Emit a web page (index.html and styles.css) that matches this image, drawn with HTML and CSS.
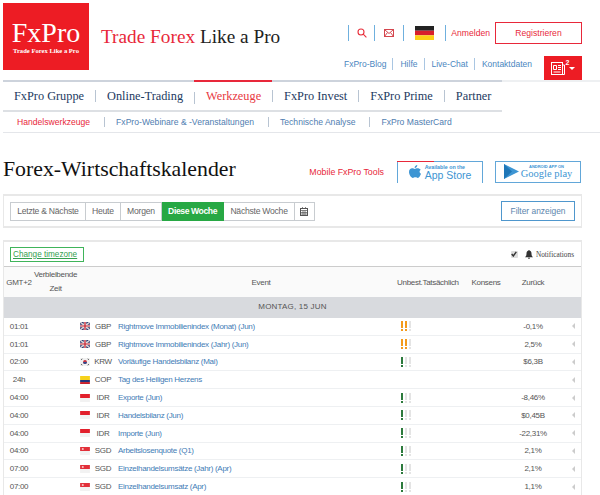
FILE: index.html
```html
<!DOCTYPE html>
<html lang="de">
  <head>
    <meta charset="UTF-8" />
    <title>Forex-Wirtschaftskalender</title>
    <link rel="stylesheet" href="styles.css">
  </head>
  <body>
    <svg class="defs" width="0" height="0">
      <symbol id="gb" viewBox="0 0 11 9">
        <rect width="11" height="9" fill="#27346e" />
        <path d="M0 0l11 9M11 0L0 9" stroke="#ddd" stroke-width="1.6" />
        <path d="M5.5 0v9M0 4.5h11" stroke="#e8e8e8" stroke-width="3" />
        <path d="M5.5 0v9M0 4.5h11" stroke="#c8202f" stroke-width="1.4" />
      </symbol>
      <symbol id="kr" viewBox="0 0 11 9">
        <rect width="11" height="9" fill="#f1f1f1" />
        <circle cx="5.5" cy="4.5" r="2.2" fill="#c8303c" />
        <path d="M3.3 4.5a2.2 2.2 0 0 0 4.4 0z" fill="#2b4a8f" />
        <path d="M1 2l1.5-1M1 7l1.5 1M8.5 1L10 2M8.5 8L10 7" stroke="#555" />
      </symbol>
      <symbol id="co" viewBox="0 0 11 9">
        <rect width="11" height="4.5" fill="#f6d21c" />
        <rect y="4.5" width="11" height="2.3" fill="#22357c" />
        <rect y="6.8" width="11" height="2.2" fill="#c9202c" />
      </symbol>
      <symbol id="id" viewBox="0 0 11 9">
        <rect width="11" height="4.5" fill="#e2202c" />
        <rect y="4.5" width="11" height="4.5" fill="#f2f2f2" />
      </symbol>
      <symbol id="sg" viewBox="0 0 11 9">
        <rect width="11" height="4.5" fill="#e2303a" />
        <rect y="4.5" width="11" height="4.5" fill="#f2f2f2" />
        <circle cx="3" cy="2.3" r="1.2" fill="#f6c6c6" />
      </symbol>
    </svg>

    <header class="top">
      <div class="logo">
        <span class="logo-name">FxPro</span>
        <span class="logo-sub">Trade Forex Like a Pro</span>
      </div>
      <p class="tagline"><span class="red">Trade Forex</span> Like a Pro</p>
      <div class="tools">
        <div class="tools-row">
          <span class="vsep"></span>
          <svg class="ico-search" width="10" height="10" viewBox="0 0 10 10" fill="none" stroke="#e8303c" stroke-width="1.1"><circle cx="4" cy="4" r="3" /><path d="M6.2 6.2L9.4 9.4" /></svg>
          <span class="vsep"></span>
          <svg class="ico-mail" width="10" height="8" viewBox="0 0 10 8" fill="none" stroke="#d4464e"><rect x=".5" y=".5" width="9" height="7" /><path d="M.5.5L5 4.5 9.5.5M.5 7.5L3.5 3.500M9.5 7.5L6.5 3.500" /></svg>
          <span class="vsep"></span>
          <svg class="flag-de" width="19" height="14" viewBox="0 0 19 14"><rect width="19" height="4.7" fill="#222" /><rect y="4.7" width="19" height="4.6" fill="#d8202c" /><rect y="9.3" width="19" height="4.7" fill="#fcd116" /></svg>
          <span class="vsep"></span>
          <a class="login">Anmelden</a>
          <a class="register">Registrieren</a>
        </div>
        <div class="tools-row links-row">
          <a>FxPro-Blog</a>
          <a>Hilfe</a>
          <a>Live-Chat</a>
          <a>Kontaktdaten</a>
          <div class="news-btn">
            <svg width="14" height="13" viewBox="0 0 14 13" fill="none" stroke="#fff"><rect x=".5" y=".5" width="11" height="12" /><path d="M11.5 3h2v9.500h-2M2.500 3.500h3v4h-3zM7 3.500h3M7 5.500h3M7 7.500h3M2.500 10h7" /></svg>
            <sup>2</sup>
            <span class="caret"></span>
          </div>
        </div>
      </div>
    </header>

    <nav class="main-nav">
      <ul>
        <li>FxPro Gruppe</li>
        <li>Online-Trading</li>
        <li class="current">Werkzeuge</li>
        <li>FxPro Invest</li>
        <li>FxPro Prime</li>
        <li>Partner</li>
      </ul>
    </nav>
    <nav class="sub-nav">
      <ul>
        <li class="current">Handelswerkzeuge</li>
        <li>FxPro-Webinare &amp; -Veranstaltungen</li>
        <li>Technische Analyse</li>
        <li>FxPro MasterCard</li>
      </ul>
    </nav>

    <section class="title-row">
      <h1>Forex-Wirtschaftskalender</h1>
      <span class="mobile-label">Mobile FxPro Tools</span>
      <a class="store store-apple">
        <svg width="12" height="14" viewBox="0 0 13 15" fill="#3d95d3"><path d="M9 0c.1 1.700-1.300 3.200-2.900 3.100C6 1.500 7.500.1 9 0zM12.600 5c-1.700 1-1.500 3.600.4 4.400-.6 1.800-2 4.500-3.400 4.500-1 0-1.400-.6-2.700-.6s-1.800.6-2.700.6C2.400 13.900 0 10.400 0 7.500 0 4.900 1.700 3.500 3.400 3.500c1.100 0 2.100.7 2.800.7.700 0 1.700-.8 3-.8 1.300 0 2.600.6 3.400 1.600z" /></svg>
        <span class="store-text"><small>Available on the</small><b>App Store</b></span>
      </a>
      <a class="store store-google">
        <svg width="15" height="15" viewBox="0 0 15 15"><path d="M0 0l15 7.500L0 15z" fill="#3d95d3" /><path d="M0 0l8 7.500L0 15" fill="#1f77b8" /></svg>
        <span class="store-text"><small class="tiny">ANDROID APP ON</small><b class="google-play">Google play</b></span>
      </a>
    </section>

    <section class="panel filters">
      <div class="tabs">
        <a>Letzte &amp; Nächste</a>
        <a>Heute</a>
        <a>Morgen</a>
        <a class="active">Diese Woche</a>
        <a>Nächste Woche</a>
        <a class="cal">
          <svg width="8" height="9" viewBox="0 0 8 9" fill="none" stroke="#555"><rect x=".5" y="1.500" width="7" height="7" /><path d="M.5 3.500h7M2.500 0v2M5.500 0v2M.5 5.500h7M.5 7h7M3 3.500v5M5 3.500v5" stroke-width=".7" /></svg>
        </a>
      </div>
      <a class="filter-btn">Filter anzeigen</a>
    </section>

    <section class="panel calendar">
      <div class="cal-top">
        <a class="timezone">Change timezone</a>
        <div class="notify">
          <span class="check">
            <svg width="6" height="6" viewBox="0 0 6 6" fill="none" stroke="#333" stroke-width="1.400"><path d="M.7 3l1.600 2L5.300.8" /></svg>
          </span>
          <svg class="bell" width="8" height="9" viewBox="0 0 8 9" fill="#333"><path d="M4 0c.5 0 .7.300.7.700C6 1 6.500 2 6.500 3.500c0 2 .5 2.800 1.500 3.700H0c1-.9 1.500-1.700 1.500-3.700C1.500 2 2 1 3.300.7 3.300.3 3.500 0 4 0zM3 7.800h2C5 8.500 4.500 9 4 9S3 8.500 3 7.800z" /></svg>
          <span class="notify-label">Notifications</span>
        </div>
      </div>
      <div class="row head">
        <span>GMT+2</span>
        <span class="remaining">Verbleibende Zeit</span>
        <span class="event-head">Event</span>
        <span>Unbest.Tatsächlich</span>
        <span>Konsens</span>
        <span>Zurück</span>
      </div>
      <div class="day">MONTAG, 15 JUN</div>

      <div class="row">
        <span>01:01</span><span></span>
        <svg class="flag"><use href="#gb" /></svg>
        <span class="cur">GBP</span>
        <a class="event">Rightmove Immobilienindex (Monat) (Jun)</a>
        <span class="imp imp-mid"><i></i><i></i><i></i></span>
        <span></span><span>-0,1%</span><span class="back"></span>
      </div>
      <div class="row">
        <span>01:01</span><span></span>
        <svg class="flag"><use href="#gb" /></svg>
        <span class="cur">GBP</span>
        <a class="event">Rightmove Immobilienindex (Jahr) (Jun)</a>
        <span class="imp imp-mid"><i></i><i></i><i></i></span>
        <span></span><span>2,5%</span><span class="back"></span>
      </div>
      <div class="row">
        <span>02:00</span><span></span>
        <svg class="flag"><use href="#kr" /></svg>
        <span class="cur">KRW</span>
        <a class="event">Vorläufige Handelsbilanz (Mai)</a>
        <span class="imp imp-low"><i></i><i></i><i></i></span>
        <span></span><span>$6,3B</span><span class="back"></span>
      </div>
      <div class="row">
        <span>24h</span><span></span>
        <svg class="flag"><use href="#co" /></svg>
        <span class="cur">COP</span>
        <a class="event">Tag des Heiligen Herzens</a>
        <span></span>
        <span></span><span></span><span class="back"></span>
      </div>
      <div class="row">
        <span>04:00</span><span></span>
        <svg class="flag"><use href="#id" /></svg>
        <span class="cur">IDR</span>
        <a class="event">Exporte (Jun)</a>
        <span class="imp imp-low"><i></i><i></i><i></i></span>
        <span></span><span>-8,46%</span><span class="back"></span>
      </div>
      <div class="row">
        <span>04:00</span><span></span>
        <svg class="flag"><use href="#id" /></svg>
        <span class="cur">IDR</span>
        <a class="event">Handelsbilanz (Jun)</a>
        <span class="imp imp-low"><i></i><i></i><i></i></span>
        <span></span><span>$0,45B</span><span class="back"></span>
      </div>
      <div class="row">
        <span>04:00</span><span></span>
        <svg class="flag"><use href="#id" /></svg>
        <span class="cur">IDR</span>
        <a class="event">Importe (Jun)</a>
        <span class="imp imp-low"><i></i><i></i><i></i></span>
        <span></span><span>-22,31%</span><span class="back"></span>
      </div>
      <div class="row">
        <span>04:00</span><span></span>
        <svg class="flag"><use href="#sg" /></svg>
        <span class="cur">SGD</span>
        <a class="event">Arbeitslosenquote (Q1)</a>
        <span class="imp imp-low"><i></i><i></i><i></i></span>
        <span></span><span>2,1%</span><span class="back"></span>
      </div>
      <div class="row">
        <span>07:00</span><span></span>
        <svg class="flag"><use href="#sg" /></svg>
        <span class="cur">SGD</span>
        <a class="event">Einzelhandelsumsätze (Jahr) (Apr)</a>
        <span class="imp imp-low"><i></i><i></i><i></i></span>
        <span></span><span>2,1%</span><span class="back"></span>
      </div>
      <div class="row">
        <span>07:00</span><span></span>
        <svg class="flag"><use href="#sg" /></svg>
        <span class="cur">SGD</span>
        <a class="event">Einzelhandelsumsatz (Apr)</a>
        <span class="imp imp-low"><i></i><i></i><i></i></span>
        <span></span><span>1,1%</span><span class="back"></span>
      </div>
    </section>
  </body>
</html>
```

FILE: styles.css
```css
html,
body {
  height: 495px;
  overflow: hidden;
}

body {
  margin: 0;
  background-color: #fff;
  font-family: "Liberation Sans", Arial, sans-serif;
  font-size: 8px;
  color: #555;
}

ul {
  list-style: none;
  margin: 0;
  padding: 0;
}

.defs {
  position: absolute;
}

.red {
  color: #e8283a;
}

/* header */
.top {
  display: flex;
  height: 80px;
  padding: 3px 18px 0 3px;
  box-sizing: border-box;
}

.logo {
  width: 86px;
  height: 67px;
  background-color: #ed1c24;
  color: #fff;
  font-family: "Liberation Serif", serif;
  display: flex;
  flex-direction: column;
  align-items: center;
  padding-top: 18px;
  box-sizing: border-box;
}

.logo-name {
  font-size: 28px;
  line-height: 24px;
}

.logo-sub {
  font-size: 6.600px;
  font-weight: 700;
  line-height: 10px;
  margin-top: 1px;
  white-space: nowrap;
}

.tagline {
  margin: 22px 0 0 12px;
  font-family: "Liberation Serif", serif;
  font-size: 19.300px;
  line-height: 24px;
  color: #222;
  white-space: nowrap;
}

.tools {
  margin-left: auto;
  display: flex;
  flex-direction: column;
  align-items: flex-end;
}

.tools-row {
  display: flex;
  align-items: center;
  height: 22px;
  margin-top: 19px;
}

.vsep {
  width: 1px;
  height: 16px;
  background-color: #6fb0de;
}

.ico-search {
  margin: 0 7px 0 8px;
}

.ico-mail {
  margin: 0 9px 0 9px;
}

.flag-de {
  margin: 0 11px 0 11px;
}

.login {
  margin: 0 5px 0 5px;
  color: #e8283a;
  font-size: 8.600px;
}

.register {
  width: 87px;
  height: 22px;
  box-sizing: border-box;
  border: 1px solid #e8283a;
  color: #e8283a;
  font-size: 8.600px;
  line-height: 20px;
  text-align: center;
}

.links-row {
  margin-top: 12px;
  height: 24px;
  font-size: 8.500px;
  color: #4a86c0;
}

.links-row a {
  padding: 0 6px 0 7px;
  border-left: 1px solid #a9c6e2;
  line-height: 12px;
  margin-bottom: 8px;
}

.links-row a:first-child {
  border-left: 0;
}

.news-btn {
  width: 38px;
  height: 24px;
  margin-left: 6px;
  background-color: #ed1c24;
  color: #fff;
  display: flex;
  align-items: center;
  justify-content: center;
}

.news-btn sup {
  font-size: 7px;
  font-weight: 700;
  line-height: 8px;
  align-self: flex-start;
  margin: 3px 0 0 1px;
}

.caret {
  border: 3px solid transparent;
  border-top: 3px solid #fff;
  margin-top: 3px;
}

/* navigation */
.main-nav {
  height: 32px;
  margin-left: 3px;
  border-top: 2px solid #eef0f2;
  box-sizing: border-box;
}

.main-nav ul {
  display: flex;
  width: 499px;
  height: 32px;
  margin-top: -2px;
  box-sizing: border-box;
  border-top: 2px solid #cdd3dc;
  border-bottom: 2px solid #dde0e4;
  font-family: "Liberation Serif", serif;
  font-size: 12.300px;
  color: #1d3a5f;
}

.main-nav li {
  position: relative;
  padding: 0 11px 0 12px;
  line-height: 29px;
  white-space: nowrap;
}

.main-nav li:first-child {
  padding-left: 11px;
}

.main-nav li + li::before,
.sub-nav li + li::before {
  content: "";
  position: absolute;
  left: 0;
  top: 8px;
  width: 1px;
  height: 12px;
  background-color: #b8c4d2;
}

.main-nav .current {
  color: #e8383f;
  margin-top: -2px;
  border-top: 2px solid #e8283a;
}

.main-nav .current::before {
  top: 10px;
}

.sub-nav ul {
  display: flex;
  height: 21px;
  margin-left: 3px;
  box-sizing: border-box;
  border-bottom: 1px solid #e4e6ea;
  padding-left: 2px;
  font-size: 8.600px;
  color: #4f7db0;
}

.sub-nav li {
  position: relative;
  padding: 0 14px 0 12px;
  line-height: 21px;
  white-space: nowrap;
}

.sub-nav li + li::before {
  top: 5px;
  height: 10px;
}

.sub-nav .current {
  color: #e8283a;
}

/* title */
.title-row {
  display: flex;
  align-items: center;
  height: 61px;
  padding: 16px 19px 0 3px;
  box-sizing: border-box;
}

h1 {
  margin: 0 0 4px;
  font-family: "Liberation Serif", serif;
  font-size: 21.800px;
  font-weight: 400;
  color: #111;
  white-space: nowrap;
}

.mobile-label {
  margin-left: auto;
  color: #e8283a;
  font-size: 8.800px;
}

.store {
  width: 86px;
  height: 22px;
  margin-left: 13px;
  box-sizing: border-box;
  border: 1px solid #62a7d9;
  display: flex;
  align-items: center;
  justify-content: center;
  gap: 4px;
  color: #3d95d3;
  position: relative;
}

.store-apple {
  border-bottom: 0;
}

.store-apple::before {
  content: "";
  position: absolute;
  left: -1px;
  top: -1px;
  width: 37px;
  height: 1px;
  background-color: #e8283a;
}

.store-google {
  margin-left: 12px;
  gap: 2px;
}

.store-text {
  display: flex;
  flex-direction: column;
}

.store small {
  font-size: 5.300px;
  line-height: 6px;
  font-weight: 700;
}

.store small.tiny {
  font-size: 4px;
  line-height: 5px;
  text-align: center;
}

.store b {
  font-size: 10.500px;
  line-height: 11px;
  font-weight: 400;
  white-space: nowrap;
}

.store .google-play {
  font-family: "Liberation Serif", serif;
  font-size: 10.500px;
  line-height: 10px;
}

/* panels */
.panel {
  width: 579px;
  margin-left: 3px;
  box-sizing: border-box;
  border: 1px solid #e8e8e8;
  border-width: 2px 1px;
}

.filters {
  height: 34px;
  display: flex;
  align-items: center;
  justify-content: space-between;
  padding: 0 6px;
}

.tabs {
  display: flex;
  height: 19px;
  font-size: 8.600px;
  letter-spacing: -0.250px;
  color: #666;
}

.tabs a {
  padding: 0 6.200px;
  line-height: 17px;
  border: 1px solid #c8ccd0;
  border-left: 0;
}

.tabs a:first-child {
  border-left: 1px solid #c8ccd0;
}

.tabs .active {
  background-color: #27a844;
  border-color: #27a844;
  color: #fff;
  font-weight: 700;
  letter-spacing: -0.400px;
}

.tabs .cal {
  display: flex;
  align-items: center;
  padding: 0 5.500px;
}

.filter-btn {
  width: 74px;
  height: 20px;
  box-sizing: border-box;
  border: 1px solid #4f97cd;
  color: #5b85ad;
  font-size: 8.400px;
  line-height: 18px;
  text-align: center;
}

.calendar {
  height: 261px;
  margin-top: 12px;
  border-bottom: 0;
  overflow: hidden;
}

.cal-top {
  height: 24px;
  display: flex;
  align-items: center;
  justify-content: space-between;
  padding: 0 6px;
  box-sizing: border-box;
}

.timezone {
  padding: 0 2px;
  height: 15px;
  line-height: 13.500px;
  border: 1px solid #3fb45a;
  box-sizing: border-box;
  width: 74px;
  color: #35a04f;
  font-size: 8.200px;
  text-decoration: underline;
  white-space: nowrap;
}

.notify {
  display: flex;
  align-items: center;
  padding-right: 1px;
}

.check {
  width: 7px;
  height: 7px;
  border-radius: 1px;
  background-color: #ddd;
  display: flex;
  align-items: center;
  justify-content: center;
}

.bell {
  margin-left: 7px;
}

.notify-label {
  margin-left: 3px;
  font-family: "Liberation Serif", serif;
  font-size: 7.300px;
  color: #444;
}

.row {
  display: grid;
  grid-template-columns: 30px 46px 11px 24px 282px 61px 56px 38px 26px;
  align-items: center;
  height: 17.800px;
  box-sizing: border-box;
  border-bottom: 1px solid #eef0f2;
  text-align: center;
  white-space: nowrap;
  letter-spacing: -0.300px;
  color: #555;
}

.head {
  height: 31px;
  grid-template-columns: 30px 43px 320px 61px 56px 38px;
  border-top: 1px solid #ccc;
  border-bottom: 0;
  background-color: #fafafa;
}

.remaining {
  white-space: normal;
  line-height: 14px;
}

.event-head {
  padding-left: 48px;
}

.day {
  height: 21px;
  background-color: #d8dade;
  text-align: center;
  line-height: 20px;
  letter-spacing: 0.200px;
  color: #555;
}

.flag {
  width: 10px;
  height: 8px;
}

.cur {
  color: #555;
}

.event {
  text-align: left;
  padding-left: 3px;
  color: #3f7cb6;
}

.imp {
  display: flex;
  gap: 2px;
  padding-left: 4px;
}

.imp i {
  width: 2px;
  height: 10px;
  background: linear-gradient(#e4e4e4 0 7px, transparent 7px 8px, #e4e4e4 8px);
}

.imp-low i:first-child {
  background: linear-gradient(#2c7a3c 0 7px, transparent 7px 8px, #2c7a3c 8px);
}

.imp-mid i:nth-child(-n + 2) {
  background: linear-gradient(#f39a1c 0 7px, transparent 7px 8px, #f39a1c 8px);
}

.back {
  width: 0;
  height: 0;
  justify-self: center;
  margin-left: 14px;
  border: 3px solid transparent;
  border-right: 3px solid #ccc;
}
```
